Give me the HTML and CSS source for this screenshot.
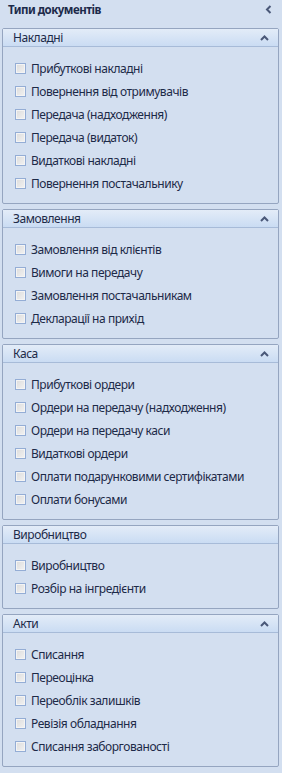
FILE: index.html
```html
<!DOCTYPE html>
<html lang="uk">
<head>
    <meta charset="UTF-8">
    <title>Типи документів</title>
    <link rel="stylesheet" href="styles.css">
</head>
<body>

    <div class="panel-title">
        <span>Типи документів</span>
        <svg class="collapse" width="7" height="9" viewBox="0 0 7 9"><path d="M5.5 1 L2 4.5 L5.5 8" fill="none" stroke="#4a5878" stroke-width="2"/></svg>
    </div>

    <div class="group">
        <div class="group-head">
            <span>Накладні</span>
            <svg class="chev" width="9" height="6" viewBox="0 0 9 6"><path d="M1 5 L4.5 1.5 L8 5" fill="none" stroke="#4a5878" stroke-width="2"/></svg>
        </div>
        <div class="items">
            <label class="item"><span class="box"></span>Прибуткові накладні</label>
            <label class="item"><span class="box"></span>Повернення від отримувачів</label>
            <label class="item"><span class="box"></span>Передача (надходження)</label>
            <label class="item"><span class="box"></span>Передача (видаток)</label>
            <label class="item"><span class="box"></span>Видаткові накладні</label>
            <label class="item"><span class="box"></span>Повернення постачальнику</label>
        </div>
    </div>

    <div class="group">
        <div class="group-head">
            <span>Замовлення</span>
            <svg class="chev" width="9" height="6" viewBox="0 0 9 6"><path d="M1 5 L4.5 1.5 L8 5" fill="none" stroke="#4a5878" stroke-width="2"/></svg>
        </div>
        <div class="items">
            <label class="item"><span class="box"></span>Замовлення від клієнтів</label>
            <label class="item"><span class="box"></span>Вимоги на передачу</label>
            <label class="item"><span class="box"></span>Замовлення постачальникам</label>
            <label class="item"><span class="box"></span>Декларації на прихід</label>
        </div>
    </div>

    <div class="group">
        <div class="group-head">
            <span>Каса</span>
            <svg class="chev" width="9" height="6" viewBox="0 0 9 6"><path d="M1 5 L4.5 1.5 L8 5" fill="none" stroke="#4a5878" stroke-width="2"/></svg>
        </div>
        <div class="items">
            <label class="item"><span class="box"></span>Прибуткові ордери</label>
            <label class="item"><span class="box"></span>Ордери на передачу (надходження)</label>
            <label class="item"><span class="box"></span>Ордери на передачу каси</label>
            <label class="item"><span class="box"></span>Видаткові ордери</label>
            <label class="item"><span class="box"></span>Оплати подарунковими сертифікатами</label>
            <label class="item"><span class="box"></span>Оплати бонусами</label>
        </div>
    </div>

    <div class="group">
        <div class="group-head">
            <span>Виробництво</span>
        </div>
        <div class="items">
            <label class="item"><span class="box"></span>Виробництво</label>
            <label class="item"><span class="box"></span>Розбір на інгредієнти</label>
        </div>
    </div>

    <div class="group">
        <div class="group-head">
            <span>Акти</span>
            <svg class="chev" width="9" height="6" viewBox="0 0 9 6"><path d="M1 5 L4.5 1.5 L8 5" fill="none" stroke="#4a5878" stroke-width="2"/></svg>
        </div>
        <div class="items">
            <label class="item"><span class="box"></span>Списання</label>
            <label class="item"><span class="box"></span>Переоцінка</label>
            <label class="item"><span class="box"></span>Переоблік залишків</label>
            <label class="item"><span class="box"></span>Ревізія обладнання</label>
            <label class="item"><span class="box"></span>Списання заборгованості</label>
        </div>
    </div>

</body>
</html>
```

FILE: styles.css
```css
body {
    margin: 0;
    background-color: #d3dff0;
    font-family: "Noto Sans", "DejaVu Sans", sans-serif;
    font-size: 12px;
    letter-spacing: -0.45px;
    color: #1d2a48;
    width: 282px;
    height: 773px;
    overflow: hidden;
}

.panel-title {
    display: flex;
    align-items: center;
    justify-content: space-between;
    height: 18px;
    padding: 0 10px 0 8px;
    margin-bottom: 10px;
    font-weight: bold;
    font-size: 11.5px;
    letter-spacing: -0.5px;
    color: #1c2a4a;
}

.group {
    margin: 0 3px 5px 2px;
    border: 1px solid #95a5c0;
    border-radius: 2px;
    background-color: #d3dff0;
}

.group-head {
    display: flex;
    align-items: center;
    justify-content: space-between;
    height: 17px;
    padding: 0 9px 0 10px;
    border-bottom: 1px solid #a7bbd8;
    background: linear-gradient(to bottom, #e3ecf8, #cadcf3);
}

.chev {
    display: block;
}

.items {
    padding: 10px 0 8px 12px;
}

.item {
    display: flex;
    align-items: center;
    height: 23px;
}

.box {
    width: 9px;
    height: 9px;
    margin-right: 5px;
    border: 1px solid #94add5;
    background: linear-gradient(to bottom right, #dcdcdc, #f2f2f2);
    box-shadow: inset 0 0 0 1px #f4f4f4;
}
```
